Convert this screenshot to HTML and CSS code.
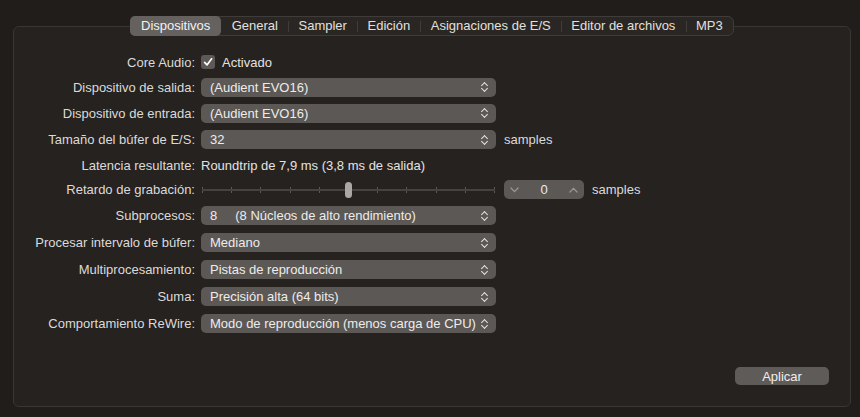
FILE: index.html
```html
<!DOCTYPE html>
<html lang="es">
<head>
    <meta charset="UTF-8">
    <meta name="viewport" content="width=device-width, initial-scale=1.0">
    <title>Ajustes de audio - Dispositivos</title>
    <link rel="stylesheet" href="styles.css">
</head>
<body>
    <div class="panel">
        <div class="tabs">
            <span class="tab active">Dispositivos</span>
            <span class="tab">General</span>
            <span class="tab sep">Sampler</span>
            <span class="tab sep">Edición</span>
            <span class="tab sep">Asignaciones de E/S</span>
            <span class="tab sep">Editor de archivos</span>
            <span class="tab sep">MP3</span>
        </div>

        <div class="form">
            <div class="row h24">
                <span class="label">Core Audio:</span>
                <div class="field">
                    <span class="check">
                        <svg width="10" height="10" viewBox="0 0 10 10"><path d="M1.6 5.4 L4 7.9 L8.6 1.8" fill="none" stroke="#fff" stroke-width="1.7" stroke-linecap="round" stroke-linejoin="round"/></svg>
                    </span>
                    <span class="value">Activado</span>
                </div>
            </div>
            <div class="row h26">
                <span class="label">Dispositivo de salida:</span>
                <div class="field"><div class="popup"><span>(Audient EVO16)</span><i class="arrows"></i></div></div>
            </div>
            <div class="row h26">
                <span class="label">Dispositivo de entrada:</span>
                <div class="field"><div class="popup"><span>(Audient EVO16)</span><i class="arrows"></i></div></div>
            </div>
            <div class="row h27">
                <span class="label">Tamaño del búfer de E/S:</span>
                <div class="field"><div class="popup"><span>32</span><i class="arrows"></i></div><span class="unit">samples</span></div>
            </div>
            <div class="row h24">
                <span class="label">Latencia resultante:</span>
                <div class="field"><span class="value">Roundtrip de 7,9 ms (3,8 ms de salida)</span></div>
            </div>
            <div class="row h25">
                <span class="label">Retardo de grabación:</span>
                <div class="field">
                    <div class="slider">
                        <div class="track"></div>
                        <div class="ticks">
                            <i></i><i></i><i></i><i></i><i></i><i></i><i></i><i></i><i></i><i></i><i></i>
                        </div>
                        <div class="thumb"></div>
                    </div>
                    <div class="stepper">
                        <svg width="9" height="6" viewBox="0 0 9 6"><path d="M1 1 L4.5 4.6 L8 1" fill="none" stroke="#9b9897" stroke-width="1.2" stroke-linecap="round"/></svg>
                        <span>0</span>
                        <svg width="9" height="6" viewBox="0 0 9 6"><path d="M1 5 L4.5 1.4 L8 5" fill="none" stroke="#9b9897" stroke-width="1.2" stroke-linecap="round"/></svg>
                    </div>
                    <span class="unit">samples</span>
                </div>
            </div>
            <div class="row h27">
                <span class="label">Subprocesos:</span>
                <div class="field"><div class="popup"><span>8<span class="gap"></span>(8 Núcleos de alto rendimiento)</span><i class="arrows"></i></div></div>
            </div>
            <div class="row h27">
                <span class="label">Procesar intervalo de búfer:</span>
                <div class="field"><div class="popup"><span>Mediano</span><i class="arrows"></i></div></div>
            </div>
            <div class="row h27">
                <span class="label">Multiprocesamiento:</span>
                <div class="field"><div class="popup"><span>Pistas de reproducción</span><i class="arrows"></i></div></div>
            </div>
            <div class="row h27">
                <span class="label">Suma:</span>
                <div class="field"><div class="popup"><span>Precisión alta (64 bits)</span><i class="arrows"></i></div></div>
            </div>
            <div class="row h27">
                <span class="label">Comportamiento ReWire:</span>
                <div class="field"><div class="popup"><span>Modo de reproducción (menos carga de CPU)</span><i class="arrows"></i></div></div>
            </div>
        </div>

        <div class="footer">
            <button class="btn">Aplicar</button>
        </div>
    </div>
</body>
</html>
```

FILE: styles.css
```css
* {
    margin: 0;
    padding: 0;
    box-sizing: border-box;
}
body {
    background: #211d1b;
    font-family: "Liberation Sans", Arial, sans-serif;
    font-size: 13px;
    color: #dcdad9;
    width: 860px;
    height: 417px;
    overflow: hidden;
    padding-top: 26px;
}
.panel {
    margin-left: 13px;
    width: 838px;
    height: 381px;
    border: 1px solid #3a3634;
    border-radius: 6px;
    background: #262220;
}
.tabs {
    display: flex;
    width: fit-content;
    margin: -11px auto 0;
    height: 20px;
    background: #2a2624;
    border: 1px solid #403c3a;
    border-radius: 6px;
}
.tab {
    position: relative;
    padding: 0 10.3px;
    line-height: 18px;
    color: #e2e0df;
    white-space: nowrap;
}
.tab.active {
    background: #65615f;
    border-radius: 5px;
    margin: -1px 0 -1px -1px;
    padding: 0 11px;
    line-height: 20px;
    color: #f2f2f2;
}
.tab.sep::before {
    content: "";
    position: absolute;
    left: 0;
    top: 4px;
    height: 11px;
    width: 1px;
    background: #403c3a;
}
.form {
    margin-top: 14px;
}
.row {
    display: flex;
    align-items: center;
}
.h24 { height: 24px; }
.h25 { height: 25px; }
.h26 { height: 26px; }
.h27 { height: 27px; }
.label {
    width: 181px;
    text-align: right;
    color: #dcdad9;
    white-space: nowrap;
}
.field {
    display: flex;
    align-items: center;
    margin-left: 6px;
}
.value {
    color: #e4e2e1;
}
.check {
    width: 14px;
    height: 14px;
    border-radius: 3px;
    background: #5c5957;
    display: flex;
    align-items: center;
    justify-content: center;
    margin-right: 7px;
}
.popup {
    width: 295px;
    height: 19px;
    background: #5b5856;
    border-radius: 5px;
    display: flex;
    align-items: center;
    justify-content: space-between;
    padding: 0 7px 0 9px;
    color: #eeecea;
}
.gap {
    display: inline-block;
    width: 18px;
}
.arrows {
    width: 8px;
    height: 11px;
    position: relative;
}
.arrows::before,
.arrows::after {
    content: "";
    position: absolute;
    left: 1px;
    width: 4px;
    height: 4px;
    border-left: 1.5px solid #e6e4e3;
    border-top: 1.5px solid #e6e4e3;
}
.arrows::before {
    top: 1.5px;
    transform: rotate(45deg);
}
.arrows::after {
    bottom: 1.5px;
    transform: rotate(-135deg);
}
.unit {
    margin-left: 8px;
    color: #dcdad9;
}
.slider {
    position: relative;
    width: 295px;
    height: 18px;
}
.track {
    position: absolute;
    left: 1px;
    right: 1px;
    top: 8px;
    height: 2px;
    background: #46423f;
}
.ticks {
    display: flex;
    justify-content: space-between;
    padding: 0 1px;
    height: 18px;
    align-items: center;
}
.ticks i {
    width: 1px;
    height: 6px;
    background: #5d5956;
}
.thumb {
    position: absolute;
    left: 144px;
    top: 1px;
    width: 7px;
    height: 16px;
    border-radius: 4px;
    background: #aaa8a7;
}
.stepper {
    margin-left: 8px;
    width: 80px;
    height: 19px;
    background: #5b5856;
    border-radius: 5px;
    display: flex;
    align-items: center;
    justify-content: space-between;
    padding: 0 6px 0 6px;
    color: #eceae9;
}
.footer {
    display: flex;
    justify-content: flex-end;
    padding-right: 21px;
    margin-top: 30px;
}
.btn {
    width: 94px;
    height: 18px;
    border: none;
    border-radius: 5px;
    background: #5e5b59;
    color: #f0eeed;
    font-family: "Liberation Sans", Arial, sans-serif;
    font-size: 13px;
}
```
